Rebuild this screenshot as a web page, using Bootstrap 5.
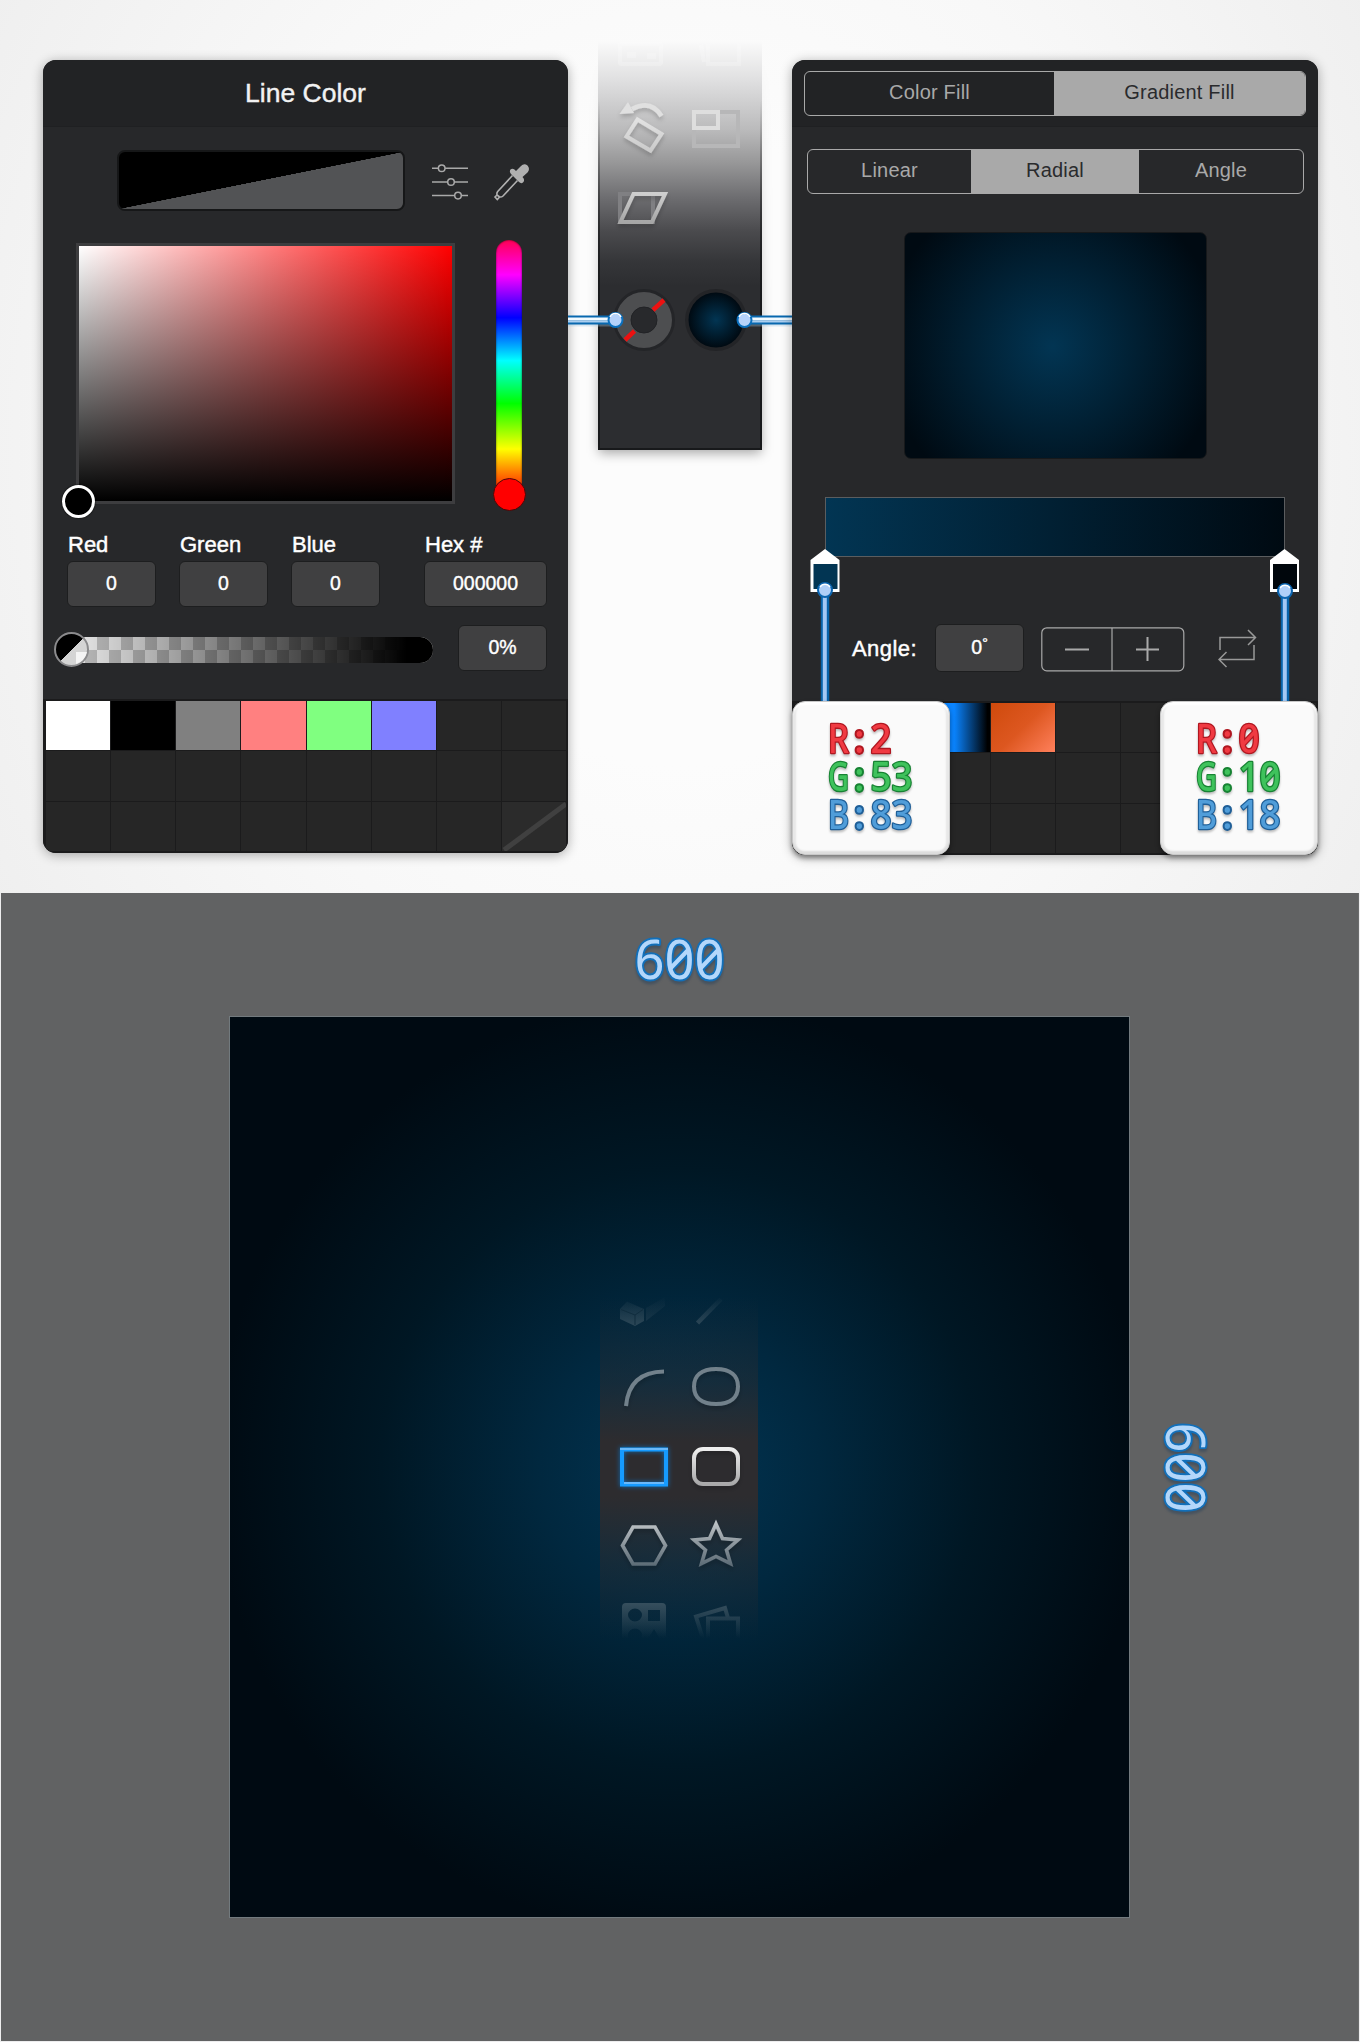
<!DOCTYPE html>
<html lang="en">
<head>
<meta charset="utf-8">
<meta name="viewport" content="width=device-width, initial-scale=1">
<title>Line and fill color</title>
<link href="https://cdn.jsdelivr.net/npm/bootstrap@5.3.0/dist/css/bootstrap.min.css" rel="stylesheet">
<style>
body{width:1360px;height:2042px;overflow:hidden;background:#ededee;font-family:"Liberation Sans",Arial,sans-serif;line-height:1.2}
svg{display:block}
.upper{height:893px;padding:60px 42px 0 43px;background:radial-gradient(ellipse 800px 900px at 680px 450px,#fcfcfc 35%,#f8f8f8 62%,#efefef 100%)}
.panel{width:525px;height:793px;background:#27282a;border-radius:13px;box-shadow:0 2px 12px rgba(0,0,0,.33);overflow:hidden}
.panel-wrap{width:526px;height:795px}
.panel-wrap .panel{width:526px;height:795px}
.panel-head{height:67px;flex:none;background:#222325;border-bottom:1px solid #1f2022}
.title-text{font-size:26.5px;color:#f2f2f2;-webkit-text-stroke:.4px #f2f2f2;line-height:66px}
.line-preview{width:288px;height:61px;border:2px solid #161718;border-radius:8px;background:linear-gradient(to bottom right,#000 0,#000 49.9%,#525355 50.1%)}
.sv{width:379px;height:261px;border:3px solid #3d3d3f;background:linear-gradient(to top,#000,rgba(0,0,0,0)),linear-gradient(to right,#fff,#f00)}
.hue{width:26px;height:268px;margin:-3px 0 0 41px;border-radius:13px;box-shadow:inset 0 0 2px rgba(0,0,0,.7);background:linear-gradient(to bottom,#ff0055 0,#f0f 13%,#00f 29%,#0ff 45%,#0f0 61%,#ff0 78%,#ff3000 92%)}
.knob{position:absolute;border-radius:50%}
.sv-knob{left:-17px;bottom:-17px;width:33px;height:33px;background:#000;border:3px solid #fff;box-shadow:0 0 2px #000}
.hue-knob{left:-3px;bottom:-3px;width:33px;height:33px;background:#f00;border:1.5px solid #4a0808}
.lbl{font-size:22px;line-height:33px;color:#fff;-webkit-text-stroke:.45px #fff;padding-left:1px;white-space:nowrap}
.entry{height:46px;border-radius:6px;background:#404041;border:1px solid #1d1e1f;color:#fff;font-size:19.5px;-webkit-text-stroke:.4px #fff;width:89px;padding-bottom:1px}
.swatches{display:grid;background:#1b1b1c;gap:1px;flex:none}
.swatches>div{background:#262626}
.seg{border:1px solid #a9a9a9;border-radius:6px;overflow:hidden;color:#a9a9a9;font-size:20px;letter-spacing:.2px}
.seg>div{display:flex;align-items:center;justify-content:center;padding-bottom:3px}
.seg .on{background:#a9a9a9;color:#2a2b2d}
.radial-preview{width:303px;height:227px;border-radius:7px;border:1px solid #17191b;background:radial-gradient(circle 168px at 49% 50.5%,#023553,#000a12)}
.ramp{width:460px;height:60px;border:1.5px solid #5b5d5f;background:linear-gradient(to right,#023553,#000a12)}
.rgb-tile{position:absolute;width:158px;height:154px;top:641px;border-radius:13px;background:#fafafa;border:1px solid #c8c8c8;box-shadow:inset 0 -3px 2px #dcdcdc,inset 0 3px 2px #fff,inset 3px 0 2px #e6e6e6,inset -3px 0 2px #e6e6e6,0 3px 5px rgba(0,0,0,.4);padding:20px 0 0 34px}
.rgb-tile svg{overflow:visible;filter:drop-shadow(0 2px 1px rgba(0,0,0,.25))}
.mono-text{font-family:"Noto Sans",sans-serif;font-feature-settings:"zero" 1;white-space:nowrap}
.overlay{position:absolute;pointer-events:none;left:0;top:0}
.lower{margin:0 1px;height:1148px;background:#616263;padding-top:123px;border-right:1px solid #6b6c6d}
.artboard{width:901px;height:902px;margin-left:228px;border:1px solid #727a7e;background:radial-gradient(circle 466px at 50% 50%,#023553 0,#01283f 30%,#001724 64%,#000a12 100%)}
</style>
<script src="https://cdn.jsdelivr.net/npm/bootstrap@5.3.0/dist/js/bootstrap.bundle.min.js"></script>
</head>
<body class="position-relative">
<section class="upper d-flex align-items-start">
  <div class="panel d-flex flex-column">
    <div class="panel-head text-center title-text">Line Color</div>
    <div class="d-flex" style="padding:23px 0 0 74px">
      <div class="line-preview"></div>
      <svg width="37" height="40" style="margin:11px 0 0 27px" fill="#27282a" stroke="#a9a9a9" stroke-width="1.5"><path d="M0 7.2H36M0 21H36M0 34.6H36"/><circle cx="9.7" cy="7.2" r="3.3"/><circle cx="19" cy="21" r="3.3"/><circle cx="26" cy="34.6" r="3.3"/></svg>
      <svg width="40" height="40" viewBox="0 0 40 40" style="margin:11px 0 0 23px"><g fill="none" stroke="#b0b0b0" stroke-width="1.6"><path d="M20.500 14.500 5.700 30.500Q4.500 32 5 34L3 36 5.300 38.500 7.600 36Q9.500 36.300 11 35L25.500 19.500"/><path d="M5 34 7.600 36"/></g><path fill="#b0b0b0" d="M18.500 8.500Q21 6.500 24 10L29 5Q32 2 35.500 4.500 38.500 8 35.500 11.500L30.500 16Q33.500 19 31 21.500 29 23 27 21L19 13Q17 10.500 18.500 8.500Z"/></svg>
    </div>
    <div class="d-flex" style="padding:32px 0 0 33px">
      <div class="sv position-relative"><span class="knob sv-knob"></span></div>
      <div class="hue position-relative"><span class="knob hue-knob"></span></div>
    </div>
    <div class="d-flex" style="padding:20px 0 0 24px;gap:23px">
      <div><div class="lbl">Red</div><div class="entry d-flex align-items-center justify-content-center">0</div></div>
      <div><div class="lbl">Green</div><div class="entry d-flex align-items-center justify-content-center">0</div></div>
      <div><div class="lbl">Blue</div><div class="entry d-flex align-items-center justify-content-center">0</div></div>
      <div style="margin-left:21px"><div class="lbl">Hex #</div><div class="entry d-flex align-items-center justify-content-center" style="width:123px">000000</div></div>
    </div>
    <div class="d-flex" style="padding:18px 0 0 10px">
      <svg width="384" height="46" style="margin-right:21px">
        <defs>
          <pattern id="chk" x="44" y="12" width="24" height="26" patternUnits="userSpaceOnUse"><rect width="24" height="26" fill="#c4c4c4"/><rect x="12" width="12" height="13" fill="#f4f4f4"/><rect y="13" width="12" height="13" fill="#f4f4f4"/></pattern>
          <linearGradient id="fade"><stop offset="0" stop-opacity="0"/><stop offset=".93" stop-opacity="1"/></linearGradient>
          <linearGradient id="half" x1="0" y1="0" x2="1" y2="1"><stop offset=".5" stop-color="#000"/><stop offset=".51" stop-color="#d4d4d4"/></linearGradient>
        </defs>
        <rect x="3" y="12" width="377" height="26" rx="13" fill="url(#chk)"/><rect x="3" y="12" width="377" height="26" rx="13" fill="url(#fade)"/>
        <circle cx="18.500" cy="24.500" r="16.500" fill="url(#half)" stroke="#8b8b8d" stroke-width="2"/>
        <path d="M23 27H34Q32 36 23 39Z" fill="#f4f4f4"/>
      </svg>
      <div class="entry d-flex align-items-center justify-content-center">0%</div>
    </div>
    <div class="swatches mt-auto" style="height:154px;padding:2px 2px 2px 3px;grid-template:repeat(3,1fr)/repeat(8,1fr)">
      <div style="background:#fff"></div><div style="background:#000"></div><div style="background:#808080"></div><div style="background:#ff8080"></div><div style="background:#80ff80"></div><div style="background:#8080ff"></div><div></div><div></div>
      <div></div><div></div><div></div><div></div><div></div><div></div><div></div><div></div>
      <div></div><div></div><div></div><div></div><div></div><div></div><div></div><div style="background:#2b2b2b"><svg width="64" height="49"><path d="M2 48 64 2" stroke="#404040" stroke-width="5"/></svg></div>
    </div>
  </div>

  <svg width="224" height="430" style="margin-top:-20px;overflow:visible" viewBox="568 40 224 430">
    <defs>
      <linearGradient id="strip" x1="0" y1="40" x2="0" y2="450" gradientUnits="userSpaceOnUse"><stop offset="0" stop-color="#fbfbfb"/><stop offset=".1" stop-color="#dfdfe0"/><stop offset=".22" stop-color="#bababb"/><stop offset=".3" stop-color="#979798"/><stop offset=".385" stop-color="#6d6d70"/><stop offset=".465" stop-color="#4b4b4e"/><stop offset=".54" stop-color="#353639"/><stop offset=".6" stop-color="#2c2d30"/></linearGradient>
      <linearGradient id="edge" x1="0" y1="100" x2="0" y2="300" gradientUnits="userSpaceOnUse"><stop offset="0" stop-color="#111" stop-opacity="0"/><stop offset="1" stop-color="#18191b"/></linearGradient>
      <linearGradient id="lite" x1="0" y1="0" x2="0" y2="1"><stop offset="0" stop-color="#e2e2e2"/><stop offset="1" stop-color="#cbcbcb"/></linearGradient>
      <linearGradient id="para" x1="0" y1="0" x2="0" y2="1"><stop offset="0" stop-color="#cecece"/><stop offset="1" stop-color="#a6a6a6"/></linearGradient>
      <radialGradient id="ball"><stop offset="0" stop-color="#023553"/><stop offset="1" stop-color="#000a12"/></radialGradient>
      <filter id="sh" x="-30%" y="-30%" width="160%" height="170%"><feDropShadow dx="0" dy="3" stdDeviation="2" flood-opacity=".2"/></filter>
      <filter id="sh2" x="-30%" y="-10%" width="160%" height="120%"><feGaussianBlur stdDeviation="6"/></filter>
      <linearGradient id="shg" x1="0" y1="60" x2="0" y2="400" gradientUnits="userSpaceOnUse"><stop offset="0" stop-opacity="0"/><stop offset="1" stop-opacity=".35"/></linearGradient>
    </defs>
    <rect x="599" y="60" width="162" height="393" fill="url(#shg)" filter="url(#sh2)"/>
    <rect x="598" y="40" width="164" height="410" rx="2" fill="url(#strip)"/>
    <path d="M599 100V449H761V100" fill="none" stroke="url(#edge)" stroke-width="2"/>
    <g fill="none" stroke="#fff" stroke-width="4" opacity=".22"><rect x="620" y="44" width="41" height="20" rx="2"/><path d="M701 45 704 62M708 44V64H739V44"/><path d="M627 55H636M647 56H656" stroke-width="6"/></g>
    <g filter="url(#sh)"><path d="M637.500 119.500 661.500 134 650.500 150.500 626.500 136.500Z" fill="none" stroke="url(#lite)" stroke-width="4"/><path d="M632 109Q651 99 661.500 116" fill="none" stroke="#e0e0e0" stroke-width="4.500"/><path d="M619.500 114 628 102 634 113Z" fill="#e0e0e0"/></g>
    <g fill="none" stroke-width="4"><rect x="694" y="112" width="44" height="34" stroke="#b7b7b8"/><rect x="694" y="112" width="24" height="16" stroke="#dedede"/></g>
    <g fill="none" stroke-width="4"><rect x="620" y="194" width="33" height="28" stroke="#808083"/><path d="M633.500 194H665L652 222H620.500Z" stroke="url(#para)" filter="url(#sh)"/></g>
    <circle cx="644" cy="320" r="31" fill="#242528"/><circle cx="644" cy="320" r="20.500" fill="none" stroke="#4d4e50" stroke-width="15"/><circle cx="644" cy="320" r="13" fill="#28292c" stroke="#222326"/>
    <path d="M625 340 634.500 331M653 310 664 300" stroke="#ec1111" stroke-width="4.500"/>
    <circle cx="716" cy="320" r="31" fill="#232427"/><circle cx="716" cy="320" r="27.500" fill="url(#ball)"/>
    <g stroke="#0868af" stroke-width="9"><path d="M568 324H616M744 324H792" stroke="#9fc4e0" stroke-width="5" opacity=".35"/><path d="M568 320H616M744 320H792"/><path d="M568 319H616M744 319H792" stroke="#f2faff" stroke-width="3"/><path d="M568 321.500H616M744 321.500H792" stroke="#abceef" stroke-width="2"/></g>
    <g fill="#b5d2fa" stroke="#0b70bd" stroke-width="2"><circle cx="615.500" cy="320" r="7"/><circle cx="744.500" cy="320" r="7"/></g>
    <path d="M610 317A6 6 0 0 1 621 317M739 317A6 6 0 0 1 750 317" fill="none" stroke="#fff" stroke-width="1.500"/>
  </svg>

  <div class="panel-wrap position-relative">
    <div class="panel d-flex flex-column">
      <div class="panel-head" style="padding:11px 0 0 12px">
        <div class="seg d-flex" style="width:502px;height:45px"><div style="width:249px">Color Fill</div><div class="on flex-fill">Gradient Fill</div></div>
      </div>
      <div class="seg d-flex flex-shrink-0" style="margin:22px 0 0 15px;width:497px;height:45px"><div style="width:163px">Linear</div><div class="on" style="width:168px">Radial</div><div class="flex-fill">Angle</div></div>
      <div class="radial-preview flex-shrink-0" style="margin:38px 0 0 112px"></div>
      <div class="ramp flex-shrink-0" style="margin:38px 0 0 33px"></div>
      <div class="d-flex" style="margin-top:67px;padding-left:59px">
        <div class="lbl" style="width:84px;line-height:49px;letter-spacing:.45px">Angle:</div>
        <div class="entry d-flex align-items-center justify-content-center" style="height:48px">0<span style="font-size:14px;margin-top:-8px">°</span></div>
        <svg width="144" height="46" style="margin:3px 0 0 17px" fill="none" stroke="#a9a9a9" stroke-width="1.200"><rect x=".8" y=".8" width="142" height="43" rx="5"/><path d="M71 1V44"/><path d="M24 22.500H48M95 22.500H118M106.500 10V34" stroke-width="2"/></svg>
        <svg width="40" height="42" style="margin:4px 0 0 33px" fill="none" stroke="#999" stroke-width="1.500"><path d="M2 22V9.500H37M30 2 37.500 9.500 30 17M36 17V31.500H2M8.500 24 1 31.500 8.500 39"/></svg>
      </div>
      <div class="swatches mt-auto" style="height:154px;padding:2px 2px 2px 3px;grid-template:repeat(3,1fr)/repeat(8,1fr)">
        <div></div><div></div><div style="background:linear-gradient(to right,#0a84ff 44%,#000 96%)"></div><div style="background:linear-gradient(135deg,#cf4a0c,#dd5720 50%,#ff805c)"></div><div></div><div></div><div></div><div></div>
        <div></div><div></div><div></div><div></div><div></div><div></div><div></div><div></div>
        <div></div><div></div><div></div><div></div><div></div><div></div><div></div><div></div>
      </div>
    </div>
    <!-- gradient stops and the lines that lead to their values -->
    <svg class="overlay" width="526" height="700" viewBox="792 60 526 700">
      <path d="M825 549 839.500 560V592H810.500V560ZM1284.500 549 1299 560V592H1270V560Z" fill="#fff"/><path d="M813.500 564H837.500V589H813.500Z" fill="#023553"/><path d="M1273 564H1297V589H1273Z" fill="#00060c"/>
      <path d="M825 592V702M1285 592V702" stroke="#0864ab" stroke-width="8.500"/><path d="M824.800 592V702M1284.800 592V702" stroke="#a3c9f5" stroke-width="4"/>
      <g fill="#afcff8" stroke="#0b65b0" stroke-width="2"><circle cx="825" cy="590" r="7"/><circle cx="1285" cy="591" r="7"/></g><path d="M820 587A6 6 0 0 1 830 587M1280 588A6 6 0 0 1 1290 588" fill="none" stroke="#fff" stroke-width="1.500"/>
    </svg>
    <div class="rgb-tile" style="left:0">
      <svg class="mono-text" width="110" height="120" font-size="39" font-weight="500" stroke-width="2.6" paint-order="stroke" stroke-linejoin="round">
        <g fill="#f03a42" stroke="#b01720"><text x="1" y="31" textLength="21" lengthAdjust="spacingAndGlyphs">R</text><text x="27" y="31" stroke-width="4">:</text><text x="43.500" y="31" textLength="21" lengthAdjust="spacingAndGlyphs">2</text></g>
        <g fill="#3fc25c" stroke="#178333"><text x="1" y="69" textLength="21" lengthAdjust="spacingAndGlyphs">G</text><text x="27" y="69" stroke-width="4">:</text><text x="43.500" y="69" textLength="42" lengthAdjust="spacingAndGlyphs">53</text></g>
        <g fill="#509dd9" stroke="#1f5f98"><text x="1" y="107" textLength="21" lengthAdjust="spacingAndGlyphs">B</text><text x="27" y="107" stroke-width="4">:</text><text x="43.500" y="107" textLength="42" lengthAdjust="spacingAndGlyphs">83</text></g>
      </svg>
    </div>
    <div class="rgb-tile" style="right:0">
      <svg class="mono-text" width="110" height="120" font-size="39" font-weight="500" stroke-width="2.6" paint-order="stroke" stroke-linejoin="round">
        <g fill="#f03a42" stroke="#b01720"><text x="1" y="31" textLength="21" lengthAdjust="spacingAndGlyphs">R</text><text x="27" y="31" stroke-width="4">:</text><text x="43.500" y="31" textLength="21" lengthAdjust="spacingAndGlyphs">0</text></g>
        <g fill="#3fc25c" stroke="#178333"><text x="1" y="69" textLength="21" lengthAdjust="spacingAndGlyphs">G</text><text x="27" y="69" stroke-width="4">:</text><text x="43.500" y="69" textLength="42" lengthAdjust="spacingAndGlyphs">10</text></g>
        <g fill="#509dd9" stroke="#1f5f98"><text x="1" y="107" textLength="21" lengthAdjust="spacingAndGlyphs">B</text><text x="27" y="107" stroke-width="4">:</text><text x="43.500" y="107" textLength="42" lengthAdjust="spacingAndGlyphs">18</text></g>
      </svg>
    </div>
  </div>
</section>

<section class="lower position-relative">
  <div class="artboard d-flex align-items-center justify-content-center">
    <svg width="220" height="380" viewBox="570 1277 220 380">
      <defs>
        <linearGradient id="bar" x1="0" y1="1297" x2="0" y2="1640" gradientUnits="userSpaceOnUse"><stop offset="0" stop-color="#2d2c2f" stop-opacity="0"/><stop offset=".25" stop-color="#2d2c2f" stop-opacity=".45"/><stop offset=".42" stop-color="#2d2c2f"/><stop offset=".58" stop-color="#2d2c2f"/><stop offset=".78" stop-color="#2d2c2f" stop-opacity=".45"/><stop offset="1" stop-color="#2d2c2f" stop-opacity="0"/></linearGradient>
        <linearGradient id="bright" x1="0" y1="0" x2="0" y2="1"><stop offset="0" stop-color="#eee"/><stop offset="1" stop-color="#a8a8a9"/></linearGradient>
        <linearGradient id="steel" x1="0" y1="1520" x2="0" y2="1568" gradientUnits="userSpaceOnUse"><stop offset="0" stop-color="#c3c7ca"/><stop offset="1" stop-color="#566671"/></linearGradient>
        <linearGradient id="dim" x1="0" y1="1600" x2="0" y2="1638" gradientUnits="userSpaceOnUse"><stop offset="0" stop-color="#3a5260"/><stop offset="1" stop-color="#3a5260" stop-opacity="0"/></linearGradient>
        <linearGradient id="dimt" x1="0" y1="1325" x2="0" y2="1296" gradientUnits="userSpaceOnUse"><stop offset="0" stop-color="#2b4656"/><stop offset="1" stop-color="#2b4656" stop-opacity="0"/></linearGradient>
        <filter id="glow" x="-30%" y="-30%" width="160%" height="160%"><feDropShadow dx="0" dy="0" stdDeviation="2.500" flood-color="#1587f0" flood-opacity=".7"/></filter>
      </defs>
      <rect x="600" y="1297" width="158" height="343" fill="url(#bar)"/>
      <path d="M620 1309 627 1301.500 644 1309V1321L635 1326 620 1319Z" fill="url(#dimt)"/><path d="M646 1308 665 1297V1306L646 1321Z" fill="url(#dimt)" opacity=".5"/><path d="M621 1309.500 635 1315 643 1309.500M635 1315V1325" stroke="#102d3e" stroke-width="1" fill="none"/>
      <path d="M697.500 1323 721 1299" stroke="url(#dimt)" stroke-width="4.500"/>
      <g fill="none" stroke="#72818b" stroke-width="4" filter="url(#sh)"><path d="M626 1406Q629 1372 664 1371.500"/><path d="M716 1369C731 1369 738 1376 738 1386.500S731 1404 716 1404 694 1397 694 1386.500 701 1369 716 1369Z"/></g>
      <g filter="url(#glow)"><rect x="622" y="1449.500" width="44" height="35" fill="none" stroke="#199bff" stroke-width="4"/><path d="M620 1449H668M624 1483H664" stroke="#6ab9fa" stroke-width="2"/></g>
      <g fill="none" filter="url(#sh)"><rect x="694" y="1449" width="44" height="35" rx="9" stroke="url(#bright)" stroke-width="4"/><path d="M633 1527H655L665.500 1545.500 655 1564H633L622.500 1545.500ZM716 1524 722.500 1538.500 738 1540 726.500 1550 730.500 1563.500 716 1556.500 701.500 1563.500 705.500 1550 694 1540 709.500 1538.500Z" stroke="url(#steel)" stroke-width="3.600"/></g>
      <path fill-rule="evenodd" fill="url(#dim)" d="M626 1603H662Q666 1603 666 1607V1639H622V1607Q622 1603 626 1603ZM628 1615A7 6.500 0 0 0 642 1615A7 6.500 0 0 0 628 1615M648 1610V1621H660V1610ZM628 1635A7 6.500 0 0 0 642 1635A7 6.500 0 0 0 628 1635M654 1629 648 1639H660Z"/>
      <path d="M703 1639 696 1616.500 725 1608 728 1618M708 1639V1618.500H738V1639" fill="none" stroke="url(#dim)" stroke-width="4"/>
    </svg>
  </div>
  <!-- artboard dimensions -->
  <svg class="overlay mono-text" width="1356" height="800" viewBox="1 893 1356 800" fill="#b3d7fb" stroke="#126fb9" stroke-width="4" stroke-linejoin="round" paint-order="stroke" font-size="55" style="filter:drop-shadow(0 3px 1px rgba(30,60,90,.4))">
    <text x="634.500" y="978.500" textLength="90" lengthAdjust="spacingAndGlyphs">600</text>
    <text transform="translate(1166 1422.500) rotate(90)" x="0" y="0" textLength="90" lengthAdjust="spacingAndGlyphs">600</text>
  </svg>
</section>
</body>
</html>
